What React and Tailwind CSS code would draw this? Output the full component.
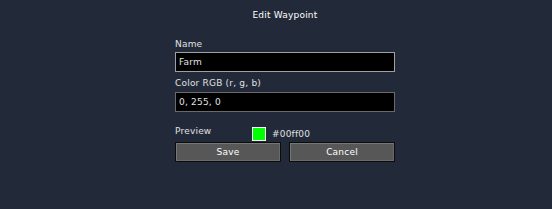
export default function App() {
  const font = { fontFamily: '"DejaVu Sans", sans-serif' };
  return (
    <div
      className="w-full h-[209px] bg-[#222a3a] text-[9px] leading-[9px] tracking-[0.2px] text-[#e0e0e0]"
      style={font}
    >
      <div className="ml-[175px] w-[220px] pt-[11px] flex flex-col">
        <div className="h-[9px] text-center text-white">Edit Waypoint</div>
        <div className="h-[9px] mt-[20px]">Name</div>
        <div className="h-[20px] mt-[3px] border border-[#a0a0a0] bg-black flex items-center pl-[3px]">
          <span className="h-[9px] text-[#e0e0e0]">Farm</span>
        </div>
        <div className="h-[9px] mt-[7px]">Color RGB (r, g, b)</div>
        <div className="h-[20px] mt-[4px] border border-[#6a6a6a] bg-black flex items-center pl-[3px]">
          <span className="h-[9px] text-[#e0e0e0]">0, 255, 0</span>
        </div>
        <div className="h-[15px] mt-[15px] flex">
          <div className="w-[77px] h-[9px]">Preview</div>
          <div className="w-[14px] h-[14px] border border-white bg-[#00ff00]"></div>
          <div className="ml-[6px] mt-[3px] h-[9px]">#00ff00</div>
        </div>
        <div className="flex gap-[8px]">
          <button
            className="w-[106px] h-[20px] border border-[#0c0c0c] bg-[#575757] shadow-[inset_1px_1px_0_#777777,inset_-1px_-1px_0_#6a6a6a] flex items-center justify-center text-white"
            style={font}
          >
            <span className="h-[9px] leading-[9px]">Save</span>
          </button>
          <button
            className="w-[106px] h-[20px] border border-[#0c0c0c] bg-[#575757] shadow-[inset_1px_1px_0_#777777,inset_-1px_-1px_0_#6a6a6a] flex items-center justify-center text-white"
            style={font}
          >
            <span className="h-[9px] leading-[9px]">Cancel</span>
          </button>
        </div>
      </div>
    </div>
  );
}
